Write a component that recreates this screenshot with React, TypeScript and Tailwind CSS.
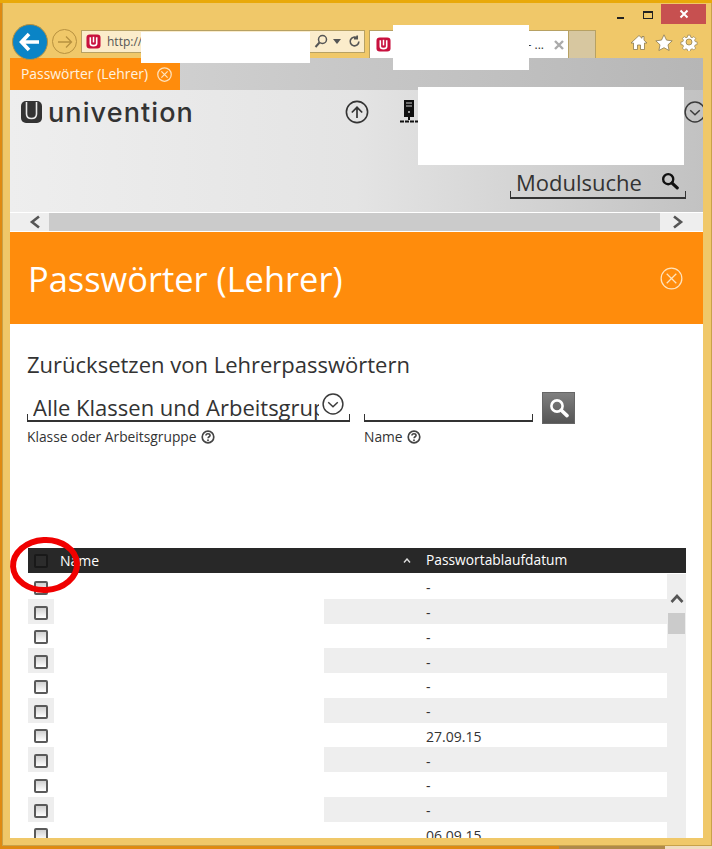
import React from "react";

const font = { fontFamily: '"Open Sans", "Noto Sans", sans-serif' };

function Checkbox({ dark }: { dark?: boolean }) {
  return dark ? (
    <span className="block w-[14px] h-[14px] rounded-[2px] border-2 border-[#191919] bg-[#2c2c2c]" />
  ) : (
    <span className="block w-[14px] h-[14px] rounded-[2px] border-2 border-[#5a5a5a] bg-gradient-to-b from-[#d0d0d0] to-[#ffffff]" />
  );
}

function Help() {
  return (
    <svg width="14" height="14" viewBox="0 0 15 15" className="shrink-0">
      <circle cx="7.5" cy="7.5" r="6.2" fill="none" stroke="#444" strokeWidth="1.8" />
      <path d="M5.3 6c0-1.3 1-2 2.2-2s2.2.7 2.2 1.8c0 1.5-2.1 1.4-2.1 3" fill="none" stroke="#444" strokeWidth="1.7" />
      <circle cx="7.5" cy="11" r="1" fill="#444" />
    </svg>
  );
}

function Magnifier({ color, size }: { color: string; size: number }) {
  return (
    <svg width={size} height={size} viewBox="0 0 20 20">
      <circle cx="8" cy="8" r="5.6" fill="none" stroke={color} strokeWidth="2.6" />
      <path d="M12.3 12.3L18 17.6" stroke={color} strokeWidth="3.6" strokeLinecap="round" />
    </svg>
  );
}

function ChevronCircle({ size }: { size: number }) {
  return (
    <svg width={size} height={size} viewBox="0 0 24 24" className="shrink-0">
      <circle cx="12" cy="12" r="10.8" fill="none" stroke="#3a3a3a" strokeWidth="1.6" />
      <path d="M6.8 10l5.2 5 5.2-5" fill="none" stroke="#3a3a3a" strokeWidth="1.6" />
    </svg>
  );
}

function CloseCircle({ size, sw }: { size: number; sw: number }) {
  return (
    <svg width={size} height={size} viewBox="0 0 24 24" className="shrink-0">
      <circle cx="12" cy="12" r="10.8" fill="none" stroke="#ffe3bd" strokeWidth={sw} />
      <path d="M7 7l10 10M17 7L7 17" stroke="#ffe3bd" strokeWidth={sw} />
    </svg>
  );
}

function Favicon({ size }: { size: number }) {
  return (
    <svg width={size} height={size} viewBox="0 0 16 16" className="shrink-0">
      <rect x="0.5" y="0.5" width="15" height="15" rx="3.5" fill="#c8103e" />
      <path d="M4.6 3.5v6.6c0 1.5 1 2.3 3.4 2.3s3.4-.8 3.4-2.3V3.5" fill="none" stroke="#fff" strokeWidth="1.7" />
      <rect x="7.2" y="3" width="1.6" height="6" fill="#fff" />
    </svg>
  );
}

const rows = ["-", "-", "-", "-", "-", "-", "27.09.15", "-", "-", "-", "06.09.15"];

export default function App() {
  return (
    <div className="relative w-[712px] h-[849px] overflow-hidden bg-[#df8a12] flex flex-col" style={font}>
      <div className="h-[3px] shrink-0 bg-[#e9a90a]" />
      <div className="ml-[2px] w-[710px] h-[843px] shrink-0 bg-[#f0c869] border-l border-r border-b border-[#c8a24a] flex flex-col">
        {/* browser chrome */}
        <div className="h-[55px] shrink-0 flex flex-col">
          <div className="h-[21px] shrink-0 flex justify-end items-start pr-[5px]">
            <div className="w-[7px] h-[2px] bg-[#222] mt-[14px] mr-[19px]" />
            <div className="w-[10px] h-[8px] border border-t-2 border-[#222] mt-[8px] mr-[8px]" />
            <div className="w-[45px] h-[20px] bg-[#c75050] mt-px flex items-center justify-center">
              <svg width="10" height="10" viewBox="0 0 10 10">
                <path d="M1.5 1.5l7 7M8.5 1.5l-7 7" stroke="#fff" strokeWidth="2" />
              </svg>
            </div>
          </div>
          <div className="flex items-start h-[34px] pl-[9px]">
            <div className="relative z-10 w-[36px] h-[36px] rounded-full bg-[#0a84c6] border border-[#b7913f] flex items-center justify-center">
              <svg width="22" height="20" viewBox="0 0 22 20">
                <path d="M10 2L2.5 10 10 18M3 10h17" fill="none" stroke="#fff" strokeWidth="3.6" />
              </svg>
            </div>
            <div className="ml-[4px] mt-[5px] w-[25px] h-[25px] rounded-full border border-[#b7913f] flex items-center justify-center">
              <svg width="16" height="14" viewBox="0 0 16 14">
                <path d="M9 1.5l5.5 5.5L9 12.5M14 7H1" fill="none" stroke="#b7913f" strokeWidth="1.3" />
              </svg>
            </div>
            <div className="ml-[4px] mt-[6px] w-[284px] h-[23px] bg-[#fbeccb] border border-[#b7a163] flex items-center pl-[4px]">
              <Favicon size={15} />
              <span className="ml-[6px] text-[12px] text-[#555]">http://</span>
              <div className="ml-auto flex items-center gap-[4px] pr-[3px]">
                <svg width="15" height="15" viewBox="0 0 15 15">
                  <circle cx="8.5" cy="5.5" r="4" fill="none" stroke="#555" strokeWidth="1.5" />
                  <path d="M5.5 8.5L1.5 13" stroke="#555" strokeWidth="2" />
                </svg>
                <svg width="8" height="5" viewBox="0 0 8 5">
                  <path d="M0 0h8L4 5z" fill="#555" />
                </svg>
                <svg width="13" height="13" viewBox="0 0 24 24" className="ml-[3px]">
                  <path d="M20 12a8 8 0 1 1-3-6.2M17 1v6h-6" fill="none" stroke="#555" strokeWidth="3" />
                </svg>
              </div>
            </div>
            <div className="ml-[4px] mt-[6px] w-[200px] h-[28px] bg-white border border-b-0 border-[#b7a163] flex items-center pl-[6px] pr-[4px]">
              <Favicon size={15} />
              <span className="ml-auto mr-[10px] text-[12px] text-[#333]">- ...</span>
              <svg width="10" height="10" viewBox="0 0 10 10">
                <path d="M1 1l8 8M9 1L1 9" stroke="#aaa" strokeWidth="2.4" />
              </svg>
            </div>
            <div className="mt-[6px] w-[27px] h-[28px] bg-[#d7c7a0] border border-b-0 border-l-0 border-[#b7a163]" />
            <div className="ml-[34px] mt-[9px] flex items-center gap-[7px]">
              <svg width="18" height="17" viewBox="0 0 18 17">
                <path d="M9 1.5L1 9h2.5v6.5h4V11h3v4.5h4V9H17L14 6.2V2.5h-2v1.8z" fill="#fff" stroke="#8a7a50" strokeWidth="0.8" />
              </svg>
              <svg width="18" height="17" viewBox="0 0 18 17">
                <path d="M9 .8l2.5 5.3 5.7.7-4.2 4 1.1 5.7L9 13.7l-5.1 2.8L5 10.8.8 6.8l5.7-.7z" fill="#fff" stroke="#8a7a50" strokeWidth="0.8" />
              </svg>
              <svg width="18" height="18" viewBox="0 0 24 24">
                <path
                  d="M10 1.5h4l.6 3 2.2.9 2.6-1.7 2.8 2.8-1.7 2.6.9 2.2 3 .6v4l-3 .6-.9 2.2 1.7 2.6-2.8 2.8-2.6-1.7-2.2.9-.6 3h-4l-.6-3-2.2-.9-2.6 1.7-2.8-2.8 1.7-2.6-.9-2.2-3-.6v-4l3-.6.9-2.2L1.9 6.5l2.8-2.8 2.6 1.7 2.2-.9z"
                  transform="translate(1.6 1.6) scale(.87)"
                  fill="#fff"
                  stroke="#8a7a50"
                  strokeWidth="1"
                />
                <circle cx="12" cy="12" r="4" fill="#f0c869" stroke="#8a7a50" />
              </svg>
            </div>
          </div>
        </div>

        {/* page */}
        <div className="ml-[7px] w-[693px] h-[780px] shrink-0 bg-white overflow-hidden flex flex-col">
          <div className="h-[32px] shrink-0 flex bg-gradient-to-r from-[#d8d8d8] to-[#b6b6b6]">
            <div className="w-[170px] bg-[#ff8c0c] flex items-center pl-[11px] text-[13.9px] text-[#fff3e0] gap-[9px]">
              <span>Passwörter (Lehrer)</span>
              <CloseCircle size={15} sw={2} />
            </div>
          </div>
          <div className="h-[122px] shrink-0 bg-gradient-to-r from-[#eeeeee] via-[#e4e4e4] to-[#c2c2c2] flex flex-col overflow-hidden">
            <div className="h-[44px] shrink-0 flex items-center">
              <svg width="21" height="22" viewBox="0 0 21 22" className="ml-[11px] shrink-0">
                <rect x="0" y="0" width="21" height="22" rx="5" fill="#333" />
                <path d="M5.5 1v12c0 3 2 4.5 5 4.5s5-1.5 5-4.5V1" fill="none" stroke="#e8e8e8" strokeWidth="1.6" />
              </svg>
              <span className="ml-[6px] w-[145px] shrink-0 whitespace-nowrap text-[27px] leading-none font-medium tracking-[1.1px] text-[#333]" style={{ fontFamily: "Inter, sans-serif" }}>
                univention
              </span>
              <svg width="24" height="24" viewBox="0 0 24 24" className="ml-[152px] shrink-0">
                <circle cx="12" cy="12" r="10.6" fill="none" stroke="#333" strokeWidth="1.6" />
                <path d="M6.8 12.5L12 7.3l5.2 5.2M12 7.5V18" fill="none" stroke="#333" strokeWidth="1.7" />
              </svg>
              <svg width="20" height="24" viewBox="0 0 20 24" className="ml-[30px] shrink-0">
                <rect x="5" y="0" width="10" height="17" fill="#111" />
                <path d="M7 3h6M7 6h6" stroke="#ccc" strokeWidth="1" />
                <circle cx="10" cy="12" r="1" fill="#ccc" />
                <path d="M10 17v3M1 21.5h18" stroke="#111" strokeWidth="2" strokeDasharray="4 1" />
              </svg>
              <div className="ml-[265px] shrink-0">
                <ChevronCircle size={22} />
              </div>
            </div>
            <div className="mt-[37px] ml-[500px] w-[176px] h-[28px] shrink-0 border-b-2 border-l border-r border-[#333] flex justify-between [border-image:linear-gradient(to_top,#333_7px,transparent_7px)_1]">
              <span className="ml-[5px] -mt-[3px] text-[22px] leading-[28px] text-[#333]">Modulsuche</span>
              <span className="mr-[6px] mt-px">
                <Magnifier color="#111" size={18} />
              </span>
            </div>
          </div>
          <div className="h-[20px] shrink-0 border-y border-white bg-[#eeeeee] flex items-stretch">
            <div className="w-[39px] pl-[19px] flex items-center">
              <svg width="12" height="14" viewBox="0 0 12 14">
                <path d="M10 1.5L3 7l7 5.5" fill="none" stroke="#555" strokeWidth="2.6" />
              </svg>
            </div>
            <div className="w-[611px] bg-[#cbcbcb]" />
            <div className="flex-1 flex items-center pl-[12px]">
              <svg width="12" height="14" viewBox="0 0 12 14">
                <path d="M2 1.5L9 7l-7 5.5" fill="none" stroke="#555" strokeWidth="2.6" />
              </svg>
            </div>
          </div>
          <div className="h-[92px] shrink-0 bg-[#ff8c0c] flex items-center justify-between pl-[18px] pr-[20px]">
            <span className="pt-[2px] text-[34.4px] text-white">Passwörter (Lehrer)</span>
            <CloseCircle size={23} sw={1.3} />
          </div>

          <div className="px-[17px] pt-[26px] shrink-0 h-[224px]">
            <h1 className="text-[22px] leading-[28px] text-[#333]">Zurücksetzen von Lehrerpasswörtern</h1>
            <div className="mt-[14px] flex items-start">
              <div className="w-[323px]">
                <div className="h-[30px] flex items-end justify-between border-b-2 border-l border-r border-[#333] [border-image:linear-gradient(to_top,#333_7px,transparent_7px)_1]">
                  <span className="ml-[5px] w-[286px] overflow-hidden whitespace-nowrap text-[22px] leading-[25px] text-[#333]">Alle Klassen und Arbeitsgruppen</span>
                  <span className="mr-[5px] mb-[5px]">
                    <ChevronCircle size={22} />
                  </span>
                </div>
                <div className="mt-[6px] flex items-center gap-[4px] text-[13.8px] leading-[18px] text-[#333]">
                  <span>Klasse oder Arbeitsgruppe</span>
                  <Help />
                </div>
              </div>
              <div className="ml-[14px] w-[169px]">
                <div className="h-[30px] border-b-2 border-l border-r border-[#333] [border-image:linear-gradient(to_top,#333_7px,transparent_7px)_1]" />
                <div className="mt-[6px] flex items-center gap-[4px] text-[13.8px] leading-[18px] text-[#333]">
                  <span>Name</span>
                  <Help />
                </div>
              </div>
              <div className="ml-[9px] w-[33px] h-[32px] bg-gradient-to-b from-[#808080] to-[#555555] border border-[#666] flex items-center justify-center">
                <Magnifier color="#fff" size={20} />
              </div>
            </div>
          </div>

          {/* grid */}
          <div className="ml-[18px] w-[658px] flex-1 flex flex-col min-h-0">
            <div className="h-[25px] shrink-0 bg-[#282828] flex items-center text-[14px] text-white">
              <div className="w-[26px] flex justify-center">
                <Checkbox dark />
              </div>
              <span className="ml-[6px] w-[343px]">Name</span>
              <svg width="8" height="5" viewBox="0 0 8 5" className="mr-[15px]">
                <path d="M1 4.5L4 1l3 3.5" fill="none" stroke="#ddd" strokeWidth="1.4" />
              </svg>
              <span className="text-[13.8px]">Passwortablaufdatum</span>
            </div>
            <div className="flex-1 min-h-0 flex pt-px">
              <div className="w-[639px]">
                {rows.map((d, i) => (
                  <div key={i} className={`h-[24.75px] pt-[3px] flex items-center ${i % 2 ? "bg-[#eeeeee]" : "bg-white"}`}>
                    <div className="w-[26px] flex justify-center">
                      <Checkbox />
                    </div>
                    <span className="ml-[372px] text-[14px] text-[#333]">{d}</span>
                  </div>
                ))}
              </div>
              <div className="w-[19px] bg-[#eeeeee] flex flex-col items-center">
                <svg width="14" height="11" viewBox="0 0 14 11" className="mt-[19px]">
                  <path d="M1.5 9L7 3l5.5 6" fill="none" stroke="#555" strokeWidth="2.6" />
                </svg>
                <div className="mt-[9px] w-[17px] h-[21px] bg-[#cbcbcb]" />
              </div>
            </div>
          </div>
        </div>
      </div>

      {/* desktop strip below the window */}
      <div className="flex-1 flex text-[14px] leading-[16px] text-white">
        <span className="ml-[80px] w-[479px]">Univention</span>
        <div className="w-[106px] bg-[#b08a4a]" />
        <div className="flex-1 bg-[#f0dcc0]" />
      </div>

      {/* redactions */}
      <div className="absolute left-[141px] top-[32px] w-[169px] h-[31px] bg-white" />
      <div className="absolute left-[393px] top-[25px] w-[136px] h-[45px] bg-white" />
      <div className="absolute left-[418px] top-[87px] w-[266px] h-[78px] bg-white" />
      <div className="absolute left-[54px] top-[574px] w-[270px] h-[264px] bg-white" />

      {/* hand-drawn highlight */}
      <svg className="absolute left-[5px] top-[532px]" width="82" height="66" viewBox="0 0 82 66">
        <ellipse cx="40" cy="33" rx="32" ry="25" fill="none" stroke="#f00000" strokeWidth="6" transform="rotate(-3 40 33)" />
      </svg>
    </div>
  );
}
